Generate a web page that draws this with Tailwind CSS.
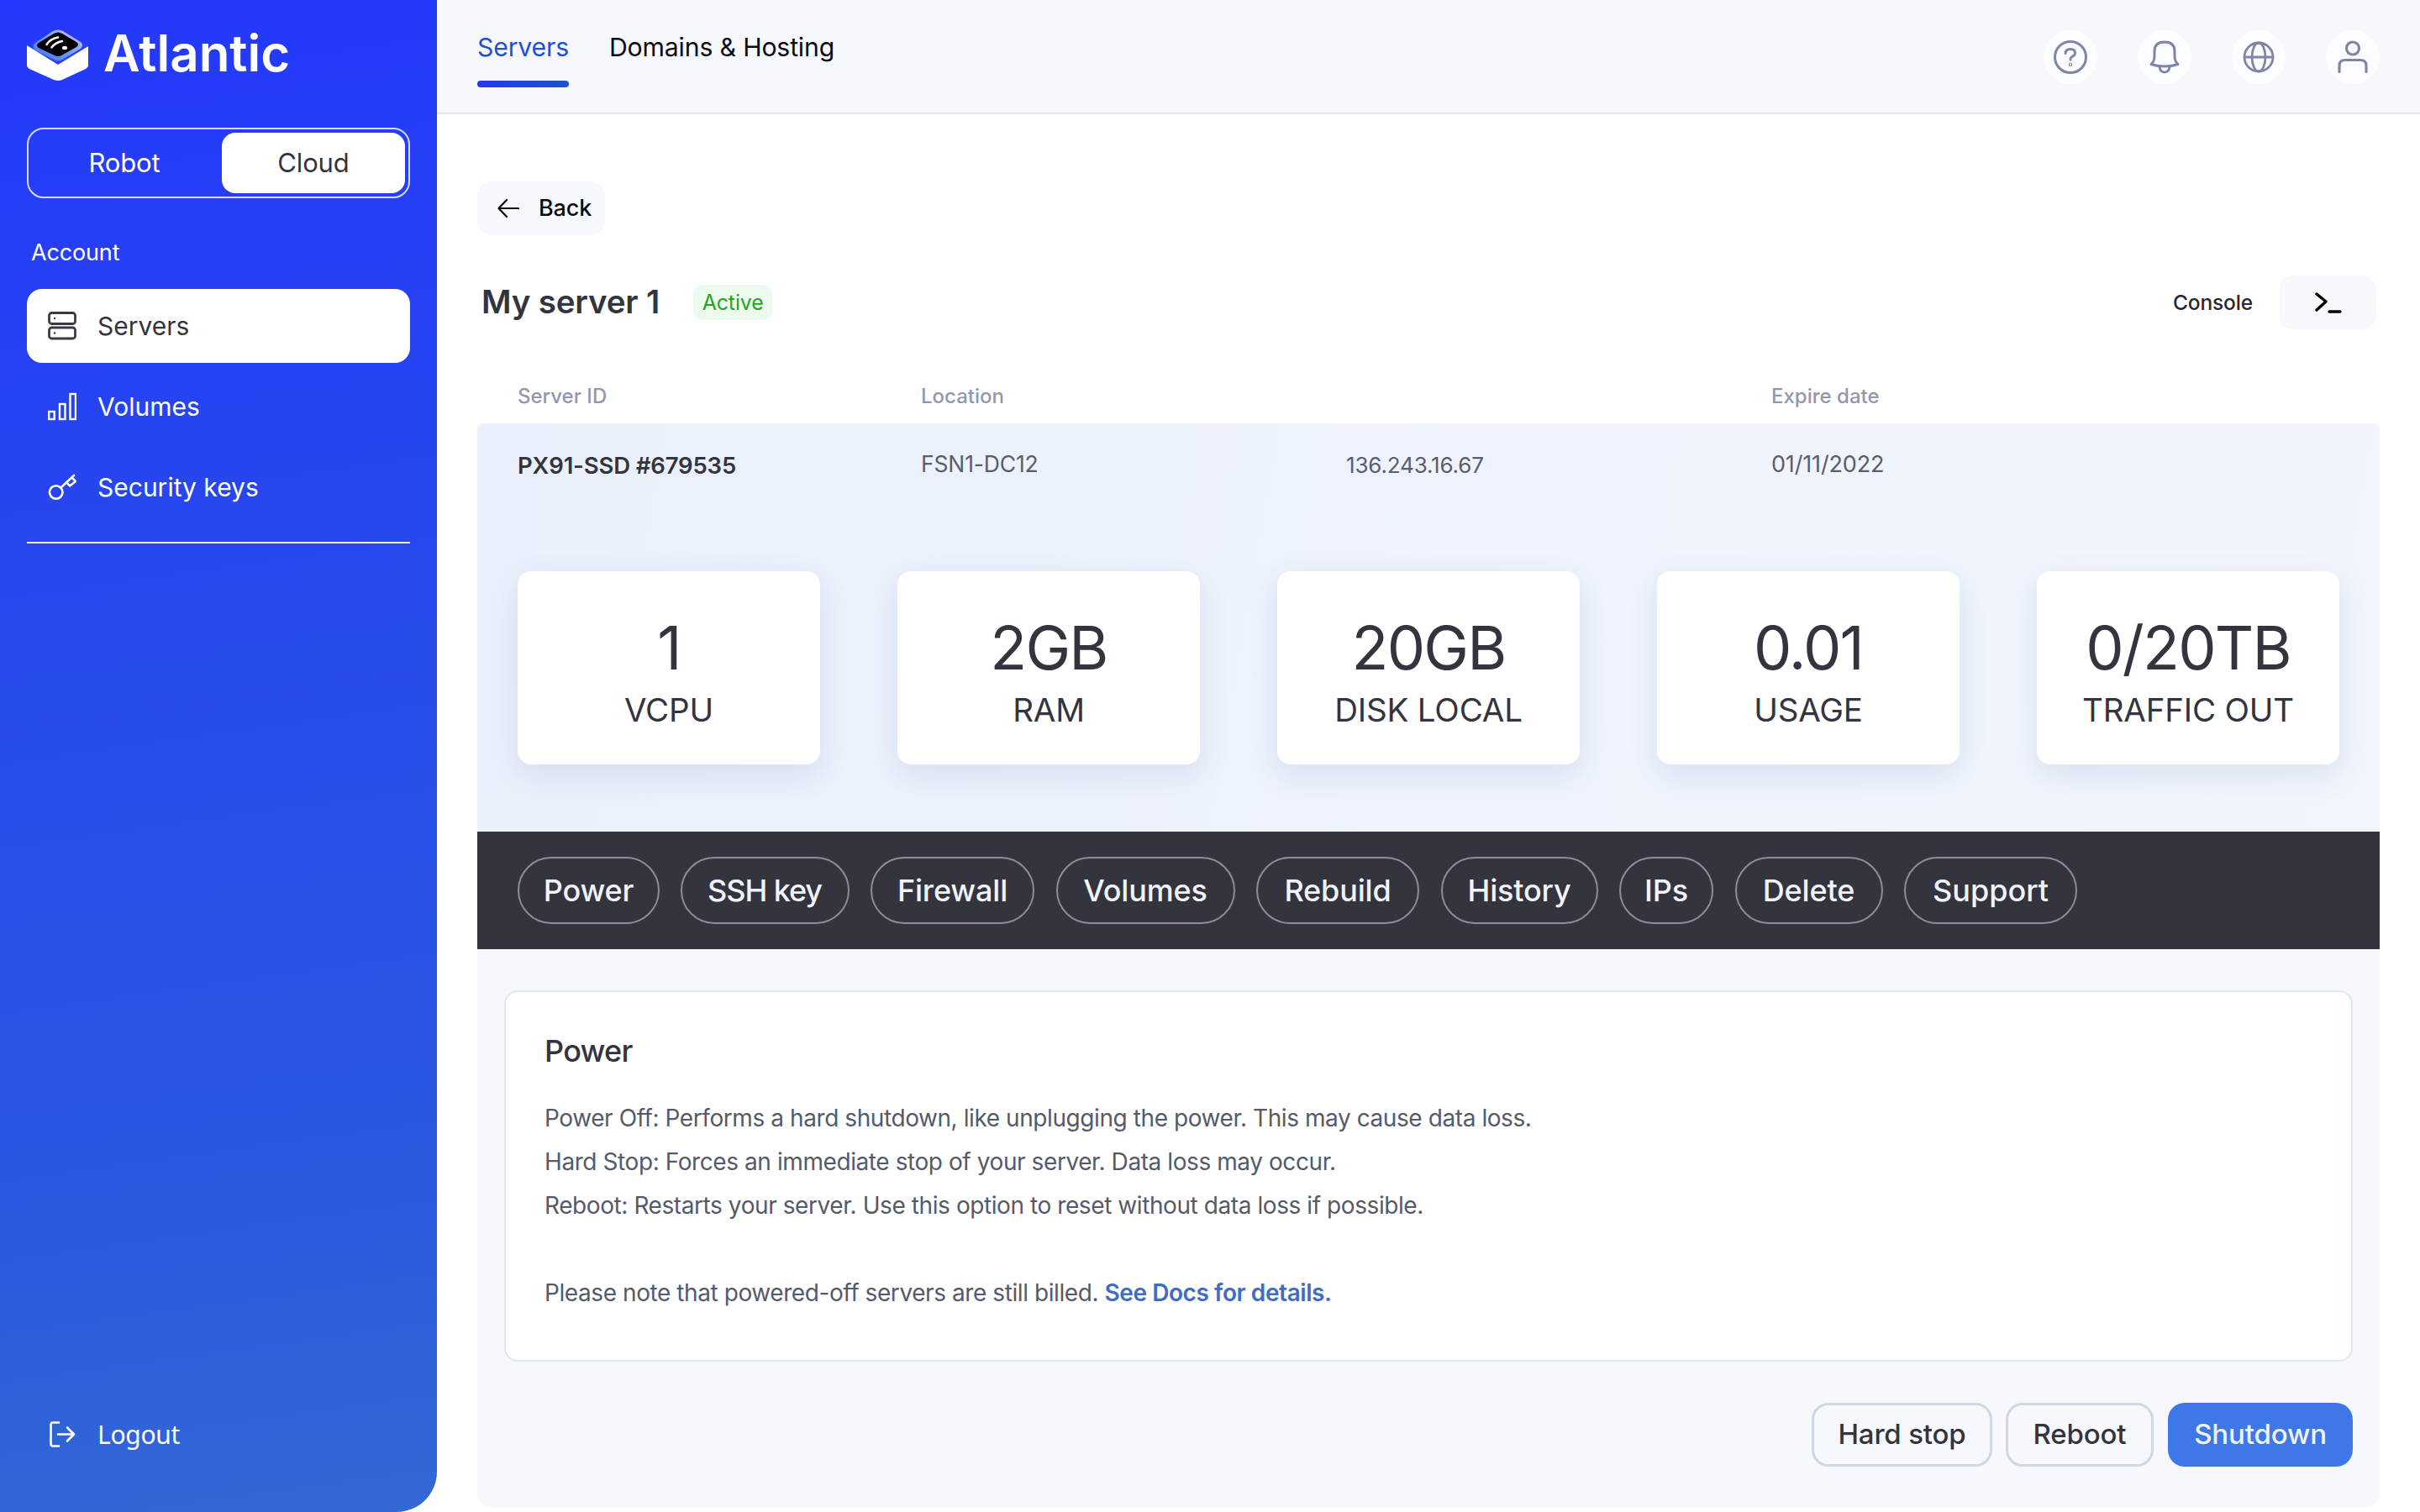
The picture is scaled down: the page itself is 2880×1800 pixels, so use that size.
<!DOCTYPE html>
<html lang="en">
<head>
<meta charset="utf-8">
<title>Atlantic</title>
<script src="https://cdn.jsdelivr.net/npm/@tailwindcss/browser@4"></script>
</head>
<body class="m-0 bg-white font-['Inter',sans-serif] tracking-[-0.01em]">
<div class="flex w-[2880px] h-[1800px] overflow-hidden bg-white">
  <aside class="w-[520px] h-[1800px] shrink-0 rounded-br-[48px] bg-[linear-gradient(172deg,#2438fb_0%,#2b5adf_80%,#3469d4_100%)] px-[32px] flex flex-col text-white">
    <div class="h-[152px] pt-[31px] flex items-start gap-[17px]">
      <svg class="w-[74px] h-[62px] shrink-0 mt-[4px]" viewBox="0 0 74 62">
        <defs><linearGradient id="rim" x1="0" y1="1" x2="1" y2="0"><stop offset="0" stop-color="#3f6be8"/><stop offset=".5" stop-color="#6f9bf0"/><stop offset="1" stop-color="#d4c6f5"/></linearGradient></defs>
        <path d="M0 19 L37 38 L73 20 V43 Q73 45 70 47 L42 60 Q37 62 32 60 L3 47 Q0 45 0 43 Z" fill="#fff"/>
        <path d="M0 19 L8 15 L37 2 L66 15 L73 20 L37 42 Z" fill="#2a3ff5"/>
        <path d="M10 16 L31 2 Q37 -1 43 2 L64 15 Q68 19 64 23 L42 36 Q37 39 32 36 L10 25 Q5 20 10 16 Z" fill="url(#rim)"/>
        <path d="M14 16 L32 5 Q37 2 42 5 L59 15 Q63 18 59 21 L41 31 Q37 33 33 31 L14 22 Q10 19 14 16 Z" fill="#040408"/>
        <path d="M23.5 18 Q28 11 37 9.5 M29.5 21.5 Q34 15.5 42 14" stroke="#fff" stroke-width="2.4" fill="none" stroke-linecap="round"/>
        <ellipse cx="45" cy="22" rx="3" ry="2.2" fill="#fff"/>
      </svg>
      <span class="text-[60px] leading-[64px] font-semibold tracking-normal">Atlantic</span>
    </div>
    <div class="h-[84px] rounded-[20px] border-2 border-white/80 flex items-center justify-between pl-[4px] pr-[4px] text-[31px]">
      <span class="w-[220px] text-center">Robot</span>
      <span class="w-[218px] h-[72px] rounded-[16px] bg-white text-[#33343d] flex items-center justify-center">Cloud</span>
    </div>
    <div class="mt-[48px] pl-[5px] text-[27px] leading-[34px]">Account</div>
    <nav class="mt-[26px] flex flex-col gap-[8px] text-[30px] tracking-normal">
      <a class="h-[88px] rounded-[18px] bg-white text-[#33343d] flex items-center gap-[25px] pl-[25px]">
        <svg class="w-[34px] h-[34px]" viewBox="0 0 34 34" fill="none" stroke="#3a3a44" stroke-width="2.8"><rect x="1.5" y="1.5" width="31" height="13" rx="3"/><rect x="1.5" y="19" width="31" height="13" rx="3"/><circle cx="8" cy="8" r="1.2" fill="#3a3a44" stroke="none"/><circle cx="8" cy="25.5" r="1.2" fill="#3a3a44" stroke="none"/></svg>
        <span>Servers</span>
      </a>
      <a class="h-[88px] flex items-center gap-[25px] pl-[25px]">
        <svg class="w-[34px] h-[34px]" viewBox="0 0 34 34" fill="none" stroke="#fff" stroke-width="2.4"><rect x="1.2" y="23" width="6.5" height="9"/><rect x="14" y="14" width="6.5" height="18"/><rect x="26.5" y="2" width="6.5" height="30"/></svg>
        <span>Volumes</span>
      </a>
      <a class="h-[88px] flex items-center gap-[25px] pl-[25px]">
        <svg class="w-[34px] h-[34px]" viewBox="0 0 34 34" fill="none" stroke="#fff" stroke-width="2.6" stroke-linejoin="round" stroke-linecap="round"><circle cx="9.7" cy="23" r="7.8"/><path d="M16 17 L31 3 M22 11 L26 15.5 L33 10 L28.5 5.5"/></svg>
        <span>Security keys</span>
      </a>
    </nav>
    <div class="mt-[21px] h-[2px] bg-white/90"></div>
    <div class="mt-auto mb-[70px] flex items-center gap-[27px] pl-[27px] text-[30px] font-['Noto_Sans',sans-serif] tracking-[-0.01em]">
      <svg class="w-[31px] h-[31px]" viewBox="0 0 31 31" fill="none" stroke="#fff" stroke-width="2.6" stroke-linecap="round" stroke-linejoin="round"><path d="M11 1.5H4Q1.5 1.5 1.5 4V27Q1.5 29.5 4 29.5H11M10 15.5H29M21 7.5L29 15.5L21 23.5"/></svg>
      <span class="-ml-[1px]">Logout</span>
    </div>
  </aside>
  <main class="flex-1 flex flex-col min-w-0">
    <header class="h-[136px] shrink-0 bg-[#f7f8fc] border-b-2 border-[#e2e6ee] pl-[48px] pr-[48px] flex items-start justify-between">
      <nav class="flex gap-[48px] text-[30.2px] leading-[40px] pt-[36px]">
        <a class="h-[68px] relative text-[#1c4fe0]">Servers<span class="absolute left-0 right-0 bottom-0 h-[8px] rounded-full bg-[linear-gradient(90deg,#2536f5,#1a56c8)]"></span></a>
        <a class="text-[#0b0b12]">Domains &amp; Hosting</a>
      </nav>
      <div class="flex gap-[48px] pt-[36px] pr-[0px] text-[#7f85a8]">
        <span class="w-[64px] h-[64px] rounded-full bg-[#fcfdfe] flex items-center justify-center"><svg class="w-[44px] h-[44px]" viewBox="0 0 44 44" fill="none" stroke="currentColor" stroke-width="3" stroke-linecap="round"><circle cx="22" cy="22" r="18.5"/><path d="M16 17.5Q16 12.5 22 12.5Q27.5 12.5 27.5 17Q27.5 20 24 21.5Q22 22.5 22 25"/><circle cx="22" cy="31" r=".6"/></svg></span>
        <span class="w-[64px] h-[64px] rounded-full bg-[#fcfdfe] flex items-center justify-center"><svg class="w-[38px] h-[40px]" viewBox="0 0 38 40" fill="none" stroke="currentColor" stroke-width="3" stroke-linejoin="round"><path d="M3 28.5Q7 25 7 19V13Q7 2 19 2Q31 2 31 13V19Q31 25 35 28.5Q28 31 19 31Q10 31 3 28.5Z"/><path d="M13 31Q13.5 38 19 38Q24.5 38 25 31"/></svg></span>
        <span class="w-[64px] h-[64px] rounded-full bg-[#fcfdfe] flex items-center justify-center"><svg class="w-[38px] h-[38px]" viewBox="0 0 38 38" fill="none" stroke="currentColor" stroke-width="2.8"><circle cx="19" cy="19" r="17"/><ellipse cx="19" cy="19" rx="8" ry="17"/><path d="M2 19H36"/></svg></span>
        <span class="w-[64px] h-[64px] rounded-full bg-[#fcfdfe] flex items-center justify-center"><svg class="w-[36px] h-[40px]" viewBox="0 0 36 40" fill="none" stroke="currentColor" stroke-width="3.2" stroke-linecap="round"><circle cx="18" cy="9.5" r="7.5"/><path d="M2 37.5V30Q2 23.5 9 23.5H27Q34 23.5 34 30V37.5"/></svg></span>
      </div>
    </header>
    <div class="px-[48px] flex-1 flex flex-col">
      <a class="mt-[80px] w-[152px] h-[64px] rounded-[16px] bg-[#f7f8fc] flex items-center gap-[23px] pl-[24px] text-[#0b0b12] text-[27px] font-medium">
        <svg class="w-[26px] h-[24px] shrink-0" viewBox="0 0 26 24" fill="none" stroke="#0b0b12" stroke-width="2.2" stroke-linecap="round" stroke-linejoin="round"><path d="M25 12H2M11 2L1.5 12L11 22"/></svg>
        <span class="pt-[1px]">Back</span>
      </a>
      <div class="mt-[48px] h-[64px] flex items-center">
        <h1 class="pl-[5px] text-[38.5px] font-semibold text-[#33343d]">My server 1</h1>
        <span class="ml-[40px] h-[42px] w-[94px] pt-[2px] rounded-[10px] bg-[#ecfbee] text-[#25a51f] text-[25px] flex items-center justify-center">Active</span>
        <span class="ml-auto pt-[1px] text-[24.5px] font-medium text-[#26272f]">Console</span>
        <span class="ml-[32px] mr-[4px] w-[115px] h-[64px] rounded-[16px] bg-[#f7f8fc] flex items-center justify-center"><svg class="w-[32px] h-[28px]" viewBox="0 0 32 28" fill="none" stroke="#000" stroke-width="3.4" stroke-linecap="round" stroke-linejoin="round"><path d="M2 4L13 13L2 23M17 25H30"/></svg></span>
      </div>
      <div class="pt-[64px] pb-[16px] pl-[48px] grid grid-cols-[480px_506px_506px_auto] text-[24px] leading-[32px] font-medium tracking-normal text-[#9297ad]">
        <span>Server ID</span><span>Location</span><span></span><span>Expire date</span>
      </div>
      <section class="bg-[linear-gradient(100deg,#eaf0fb,#eef3fd_50%,#f1f5fd)] rounded-t-[6px] px-[48px] pt-[26px] pb-[80px]">
        <div class="grid grid-cols-[480px_506px_506px_auto] h-[50px] items-center text-[#5a5d6b]">
          <span class="text-[27.5px] font-semibold text-[#33343d]">PX91-SSD #679535</span>
          <span class="text-[26.5px] pb-[4px]">FSN1-DC12</span>
          <span class="text-[26px] pb-[4px]">136.243.16.67</span>
          <span class="text-[27px] pb-[4px]">01/11/2022</span>
        </div>
        <div class="mt-[100px] flex justify-between">
          <div class="w-[360px] h-[230px] rounded-[16px] bg-white shadow-[0_12px_36px_rgba(60,80,130,0.12)] flex flex-col items-center pt-[55px] text-[#33343d]"><span class="text-[72px] leading-[72px] tracking-[-0.025em]">1</span><span class="mt-[14px] text-[38.5px] leading-[48px]">VCPU</span></div>
          <div class="w-[360px] h-[230px] rounded-[16px] bg-white shadow-[0_12px_36px_rgba(60,80,130,0.12)] flex flex-col items-center pt-[55px] text-[#33343d]"><span class="text-[72px] leading-[72px] tracking-[-0.025em]">2GB</span><span class="mt-[14px] text-[38.5px] leading-[48px]">RAM</span></div>
          <div class="w-[360px] h-[230px] rounded-[16px] bg-white shadow-[0_12px_36px_rgba(60,80,130,0.12)] flex flex-col items-center pt-[55px] text-[#33343d]"><span class="text-[72px] leading-[72px] tracking-[-0.025em]">20GB</span><span class="mt-[14px] text-[38.5px] leading-[48px]">DISK LOCAL</span></div>
          <div class="w-[360px] h-[230px] rounded-[16px] bg-white shadow-[0_12px_36px_rgba(60,80,130,0.12)] flex flex-col items-center pt-[55px] text-[#33343d]"><span class="text-[72px] leading-[72px] tracking-[-0.025em]">0.01</span><span class="mt-[14px] text-[38.5px] leading-[48px]">USAGE</span></div>
          <div class="w-[360px] h-[230px] rounded-[16px] bg-white shadow-[0_12px_36px_rgba(60,80,130,0.12)] flex flex-col items-center pt-[55px] text-[#33343d]"><span class="text-[72px] leading-[72px] tracking-[-0.025em]">0/20TB</span><span class="mt-[14px] text-[38.5px] leading-[48px]">TRAFFIC OUT</span></div>
        </div>
      </section>
      <div class="h-[140px] bg-[#33343d] px-[48px] flex items-center gap-[25.5px] text-[36px] font-medium text-[#f0f3fb]">
        <a class="h-[80px] w-[169px] rounded-full border-2 border-[#8a8d9c] flex items-center justify-center">Power</a>
        <a class="h-[80px] w-[201px] -ml-[1px] rounded-full border-2 border-[#8a8d9c] flex items-center justify-center tracking-[-0.03em]">SSH key</a>
        <a class="h-[80px] w-[195px] rounded-full border-2 border-[#8a8d9c] flex items-center justify-center">Firewall</a>
        <a class="h-[80px] w-[213px] rounded-full border-2 border-[#8a8d9c] flex items-center justify-center">Volumes</a>
        <a class="h-[80px] w-[194px] rounded-full border-2 border-[#8a8d9c] flex items-center justify-center">Rebuild</a>
        <a class="h-[80px] w-[187px] rounded-full border-2 border-[#8a8d9c] flex items-center justify-center">History</a>
        <a class="h-[80px] w-[112px] rounded-full border-2 border-[#8a8d9c] flex items-center justify-center">IPs</a>
        <a class="h-[80px] w-[176px] rounded-full border-2 border-[#8a8d9c] flex items-center justify-center">Delete</a>
        <a class="h-[80px] w-[206px] rounded-full border-2 border-[#8a8d9c] flex items-center justify-center tracking-normal">Support</a>
      </div>
      <section class="bg-[#f7f8fc] rounded-b-[16px] px-[32px] pt-[49px] pb-[48px]">
        <div class="h-[442px] rounded-[16px] bg-white border-2 border-[#dfe5f3] pl-[46px] pt-[48px]">
          <h2 class="text-[36px] leading-[44px] font-medium tracking-[-0.02em] text-[#33343d]">Power</h2>
          <div class="mt-[32px] text-[28px] leading-[52px] tracking-[-0.015em] text-[#555a6a]">
            <p>Power Off: Performs a hard shutdown, like unplugging the power. This may cause data loss.</p>
            <p>Hard Stop: Forces an immediate stop of your server. Data loss may occur.</p>
            <p>Reboot: Restarts your server. Use this option to reset without data loss if possible.</p>
            <p class="mt-[52px]">Please note that powered-off servers are still billed. <a class="font-semibold text-[#3f6cc4]">See Docs for details.</a></p>
          </div>
        </div>
        <div class="mt-[49px] flex justify-end gap-[16px] text-[33px] font-medium">
          <button class="h-[76px] w-[215px] rounded-[20px] border-[3px] border-[#cfd6e4] text-[#33343d]">Hard stop</button>
          <button class="h-[76px] w-[176px] rounded-[20px] border-[3px] border-[#cfd6e4] text-[#33343d]">Reboot</button>
          <button class="h-[76px] w-[220px] ml-[1px] rounded-[20px] bg-[#3e78e8] text-[#f0f3fb]">Shutdown</button>
        </div>
      </section>
    </div>
  </main>
</div>
</body>
</html>
